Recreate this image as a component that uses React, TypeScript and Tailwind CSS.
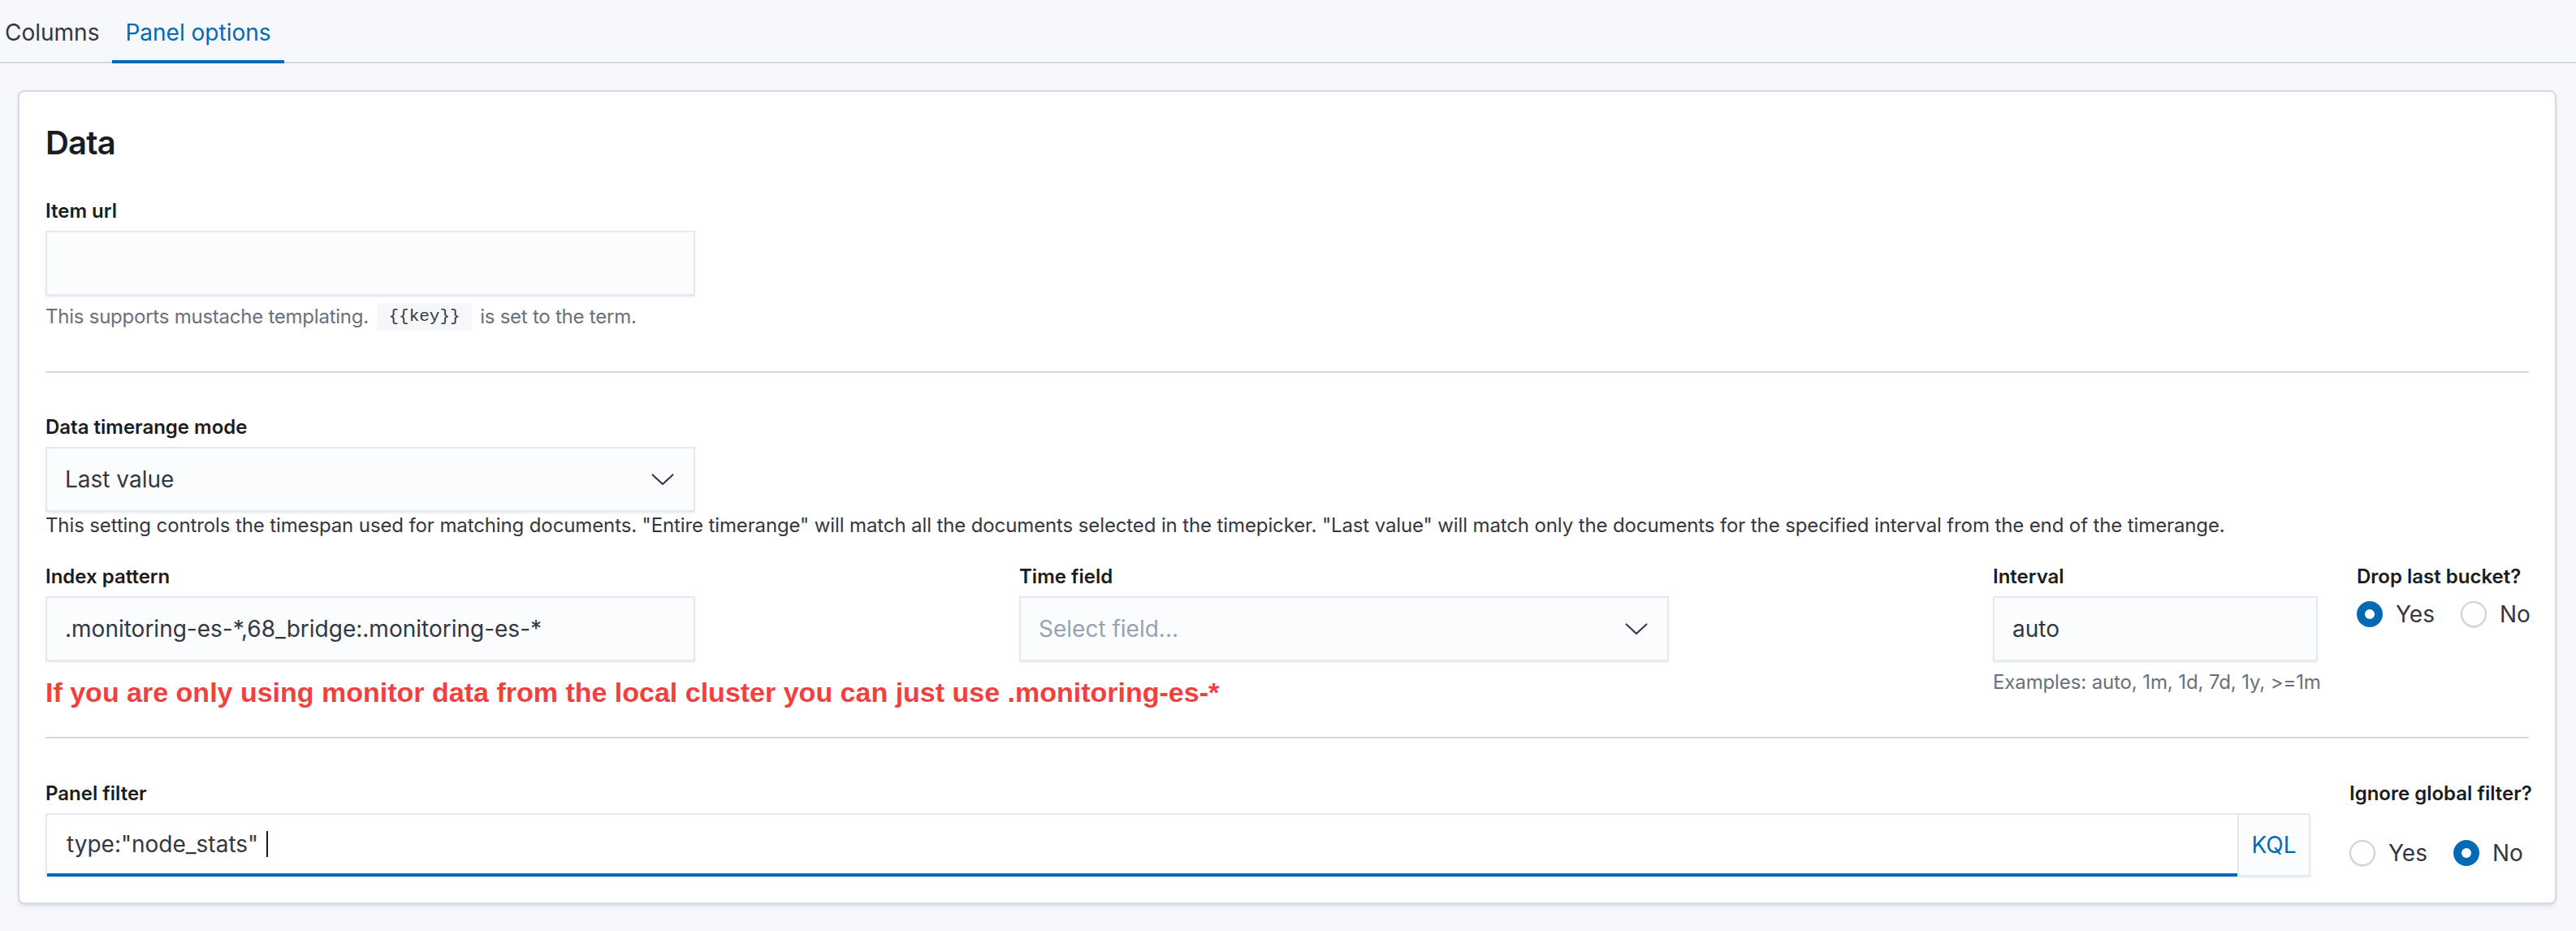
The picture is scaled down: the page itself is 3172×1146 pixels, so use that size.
import React from "react";

const Chevron = () => (
  <svg width="32" height="32" viewBox="0 0 16 16" fill="none">
    <path d="M1.8 5.2 L8 11 L14.2 5.2" stroke="#343741" strokeWidth="1.05" strokeLinecap="round" strokeLinejoin="round" />
  </svg>
);

const Radio = ({ checked, label }: { checked: boolean; label: string }) => (
  <div className="flex items-center">
    {checked ? (
      <span className="flex h-[32px] w-[32px] items-center justify-center rounded-full bg-[#006bb4]">
        <span className="h-[12px] w-[12px] rounded-full bg-white" />
      </span>
    ) : (
      <span className="h-[32px] w-[32px] rounded-full border-2 border-[#cdd0d5] bg-white shadow-[0_2px_2px_-1px_rgba(152,162,179,0.35)]" />
    )}
    <span className="ml-[16px] text-[28px] leading-[40px] text-[#343741]">{label}</span>
  </div>
);

const Label = ({ children }: { children: React.ReactNode }) => (
  <div className="mb-[8px] h-[32px] whitespace-nowrap text-[24px] font-semibold leading-[32px] text-[#1a1c21]">
    {children}
  </div>
);

const field =
  "flex h-[80px] items-center border-2 border-[#e3e8f2] bg-[#fbfcfd] px-[22px] text-[28px] text-[#343741] shadow-[0_2px_3px_-1px_rgba(152,162,179,0.3)]";

export default function App() {
  return (
    <div className="min-h-[1146px] w-[3172px] bg-[#f7f8fc] font-['Inter',sans-serif]">
      <div className="h-[78px] border-b-2 border-[#d3dae6]">
        <div className="-ml-[10px] flex">
          <div className="-mb-[2px] flex h-[78px] items-center border-b-4 border-transparent px-[16px] pt-[6px] text-[28px] text-[#343741]">
            Columns
          </div>
          <div className="-mb-[2px] flex h-[78px] items-center border-b-4 border-[#006bb4] px-[16px] pt-[6px] text-[28px] text-[#006bb4]">
            Panel options
          </div>
        </div>
      </div>

      <div className="ml-[22px] mr-[24px] mt-[33px] rounded-[8px] border-2 border-[#d3dae6] bg-white p-[32px] shadow-[0_2px_4px_rgba(0,0,0,0.06),0_4px_8px_-4px_rgba(152,162,179,0.25)]">
        <div className="mt-[7px] h-[48px] text-[40px] font-semibold leading-[48px] tracking-[-0.02em] text-[#1a1c21]">
          Data
        </div>

        <div className="mt-[44px]">
          <Label>Item url</Label>
          <div className={`${field} w-[800px]`} />
          <div className="mt-[8px] flex items-center text-[24px] leading-[36px] tracking-[-0.01em] text-[#69707d]">
            <span className="whitespace-pre">This supports mustache templating. </span>
            <code className="mx-[4px] bg-[#f5f7fa] px-[14px] font-['Liberation_Mono',monospace] text-[21px] leading-[34px] tracking-normal text-[#343741]">
              {"{{key}}"}
            </code>
            <span className="whitespace-pre"> is set to the term.</span>
          </div>
        </div>

        <div className="mt-[49px] h-[2px] bg-[#d3dae6]" />

        <div className="mt-[51px]">
          <Label>Data timerange mode</Label>
          <div className={`${field} w-[800px] justify-between pr-[22px]`}>
            <span>Last value</span>
            <Chevron />
          </div>
          <div className="whitespace-nowrap text-[24px] leading-[34px] tracking-[-0.005em] text-[#343741]">
            This setting controls the timespan used for matching documents. "Entire timerange" will match all the documents selected in the timepicker. "Last value" will match only the documents for the specified interval from the end of the timerange.
          </div>
        </div>

        <div className="mt-[30px] flex gap-[48px]">
          <div className="min-w-0 flex-1">
            <Label>Index pattern</Label>
            <div className={`${field} w-[800px]`}>.monitoring-es-*,68_bridge:.monitoring-es-*</div>
            <div className="mt-[18px] whitespace-nowrap font-['Liberation_Sans',Arial,sans-serif] text-[34px] font-bold leading-[40px] text-[#f2403f]">
              If you are only using monitor data from the local cluster you can just use .monitoring-es-*
            </div>
          </div>
          <div className="min-w-0 flex-1">
            <Label>Time field</Label>
            <div className={`${field} w-[800px] justify-between pr-[22px]`}>
              <span className="text-[#98a2b3]">Select field...</span>
              <Chevron />
            </div>
          </div>
          <div className="w-[400px] shrink-0">
            <Label>Interval</Label>
            <div className={`${field} w-full text-[#69707d]`}>auto</div>
            <div className="mt-[8px] whitespace-nowrap text-[24px] leading-[36px] tracking-[-0.005em] text-[#69707d]">
              Examples: auto, 1m, 1d, 7d, 1y, &gt;=1m
            </div>
          </div>
          <div className="w-[212px] shrink-0">
            <Label>Drop last bucket?</Label>
            <div className="flex h-[44px] items-center gap-[32px]">
              <Radio checked label="Yes" />
              <Radio checked={false} label="No" />
            </div>
          </div>
        </div>

        <div className="mt-[35px] h-[2px] bg-[#d3dae6]" />

        <div className="mt-[52px] flex gap-[48px]">
          <div className="min-w-0 flex-1">
            <Label>Panel filter</Label>
            <div className="flex h-[78px] border-2 border-[#e3e8f2] shadow-[0_2px_3px_-1px_rgba(152,162,179,0.3)]">
              <div className="-mb-[2px] flex flex-1 items-center border-b-4 border-[#006bb4] bg-white px-[24px] text-[28px] text-[#343741]">
                <span className="whitespace-pre">type:"node_stats" </span>
                <span className="ml-[2px] h-[32px] w-[2px] bg-[#1a1c21]" />
              </div>
              <div className="flex w-[88px] items-center justify-center border-l-2 border-[#e3e8f2] bg-[#fbfcfd] text-[28px] text-[#006bb4]">
                KQL
              </div>
            </div>
          </div>
          <div className="w-[221px] shrink-0">
            <Label>Ignore global filter?</Label>
            <div className="flex items-center gap-[32px] pt-[29px]">
              <Radio checked={false} label="Yes" />
              <Radio checked label="No" />
            </div>
          </div>
        </div>
      </div>
    </div>
  );
}
